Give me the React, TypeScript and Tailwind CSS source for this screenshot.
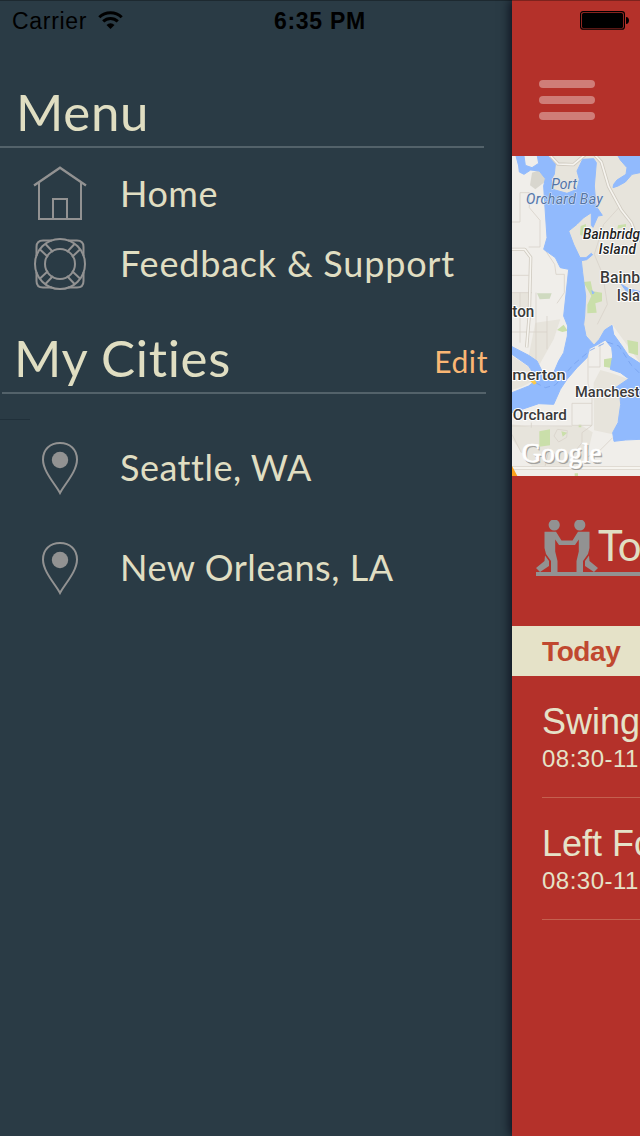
import React from 'react';

const helvetica = "font-['Liberation_Sans',sans-serif]";

function WifiIcon() {
  return (
    <svg width="25" height="18" viewBox="0 0 25 18" fill="none" stroke="#000" strokeWidth="3">
      <path d="M1.300 6.200a16 16 0 0 1 22.400 0" />
      <path d="M5.200 10.400a10.500 10.500 0 0 1 14.600 0" />
      <path d="M12.500 18l-4-4.100a5.800 5.800 0 0 1 8 0z" fill="#000" stroke="none" />
    </svg>
  );
}

function HomeIcon() {
  return (
    <svg width="54" height="54" viewBox="0 0 54 54" fill="none" stroke="#929292" strokeWidth="2">
      <path d="M1 19.500L27 1.700l26 17.800" strokeWidth="2.300" />
      <path d="M6 17v36h42V17" />
      <path d="M20 53V33h14v20" />
    </svg>
  );
}

function SupportIcon() {
  return (
    <svg width="54" height="54" viewBox="0 0 54 54" fill="none" stroke="#929292" strokeWidth="2">
      <circle cx="27" cy="27" r="25" />
      <circle cx="27" cy="27" r="15" />
      {[0, 90, 180, 270].map((a) => (
        <g key={a} transform={`rotate(${a} 27 27)`}>
          <path d="M19 3.500H10Q3.500 3.500 3.500 10v9" />
          <path d="M12 6.500l8 8.500M6.500 12l8.500 8" />
        </g>
      ))}
    </svg>
  );
}

function PinIcon() {
  return (
    <svg width="38" height="54" viewBox="0 0 38 54" fill="none" stroke="#929292" strokeWidth="2">
      <path d="M19 52C14.500 43.500 2 30.500 2 18.500C2 8.500 9 2 19 2S36 8.500 36 18.500C36 30.500 23.500 43.500 19 52z" />
      <circle cx="19" cy="19" r="8.200" fill="#929292" stroke="none" />
    </svg>
  );
}

function Person() {
  return (
    <>
      <circle cx="18.200" cy="5" r="5.600" />
      <path d="M8.500 11.700H20L25.500 20.500H31V25H23L19.200 19.500v12L21.500 41V53H15V41L10 34L8.500 28z" />
      <path d="M9 35.500L13 41v5L4 52L0 48l8.500-7z" />
    </>
  );
}

function PeopleIcon() {
  return (
    <svg className="shrink-0" width="62" height="53" viewBox="0 0 62 53" fill="#929292">
      <Person />
      <g transform="translate(62 0) scale(-1 1)">
        <Person />
      </g>
    </svg>
  );
}

function AreaMap() {
  return (
    <svg width="128" height="320" viewBox="0 0 384 960" className="block">
      <rect width="384" height="960" fill="#f0eeea" />
      <g fill="#e7e4dc">
        <path d="M110 0H384V620L300 505L246 570L195 500V300L150 180L110 80z" />
        <path d="M245 680l20-38 35 10 50 18-24 40v60l-24 65-56-12z" />
        <path d="M0 805l60 8 150-4 32 20-12 50-26 50H60L0 850z" />
        <path d="M60 50l30-10 12 35-32 25-16-12z" fill="#d8d6ce" />
        <path d="M0 600l50 32 24 38-44 22-30 10z" />
        <path d="M70 500l75-10-20 60-45 80-30-30z" />
        <path d="M0 410h52v70H0z" />
      </g>
      <g fill="#cadfaa">
        <path d="M206 210l16-6-4 38-14-6z" />
        <path d="M214 378l22-2 6 30 28 4v26l-20 6 4 28-28 2v-26l12-26z" />
        <path d="M75 412h44l-6 16-30 2z" fill="#cfdac0" />
        <path d="M135 522l20-16 12 18-16 4z" />
        <path d="M276 610l36-6v22l-14 10-22-4z" />
        <path d="M346 552l32 6v40l-28-8z" />
        <path d="M82 826l32-6v48l-32 4z" />
        <path d="M318 208l24-4v8l-26 6zM148 826l18 4-14 12zM188 952h10v8h-10zM200 806h8v8h-8z" />
      </g>
      <g fill="none" stroke="#d8d3ca" strokeWidth="2.500">
        <path d="M0 198H24V110H52v45l32 38v80H50" />
        <path d="M98 280l30 45 4 30h25v55l-22 32M0 410h60M0 358h50M24 410v150M0 528h105M72 410v210M105 480v100" />
        <path d="M325 150l-50 55-28 90 25 60 14 90-30 60" />
        <path d="M228 592v90l12 42v18h-60v66M264 565v68h-34M240 742v66l-30 22v30l-20 25M180 808h60" />
        <path d="M0 810h180M58 800v15M0 835l28 55M126 840l10-20 30 4-2 20-24 14z" />
        <path d="M302 845l-40 40-40 20M20 940h364M110 885l-12 50" />
      </g>
      <g fill="none" strokeLinejoin="round">
        <path d="M116 0l22 24 46 2 38-32M246 -6l22 24 22 74 38 70 30 38 22 60M0 280h38l18 24-4 170-8 100" stroke="#d0cbc1" strokeWidth="10" />
        <path d="M116 0l22 24 46 2 38-32M246 -6l22 24 22 74 38 70 30 38 22 60M0 280h38l18 24-4 170-8 100" stroke="#f6f4ef" strokeWidth="5" />
        <path d="M0 936h384" stroke="#d8d3ca" strokeWidth="12" />
        <path d="M0 936h384" stroke="#f6f4ef" strokeWidth="7" />
      </g>
      <g fill="#91bafd" strokeLinejoin="round" stroke="#91bafd" strokeWidth="3">
        <path d="M76 0H108L130 25L127 55L118 70L122 100L165 112L195 100L202 70L195 45L212 10L245 8L253 20L247 90L252 150L271 178L258 180L243 214L238 208L238 170L215 185L195 205L170 225L185 265L204 305L222 305L238 292L242 296L224 311L208 314L212 350L221 420L218 480L215 505L222 540L246 567L262 550L278 522L300 508L305 535L330 570L350 600L384 622V850L340 852L306 856L302 830L318 800L326 745L322 705L312 694L350 668L325 650L295 640L302 600L299 575L280 552L258 565L232 578L225 605L195 635L165 670L145 700L125 745L80 743L0 770V710L50 690L75 670L50 630L0 595V572L50 598L75 615L90 645L105 660L125 650L140 615L155 590L166 540L167 510L155 480L170 340L145 335L130 305L95 280L105 245L98 140L95 90L100 68L82 45L56 42L36 55L22 48L20 30L12 0H36L40 28L60 35L80 22z" />
        <path d="M318 0H384V50L360 55L340 78L318 90L303 95L305 85L315 72L342 55L345 35L325 12z" />
        <path d="M328 385l20 12 36 10v6l-38-3zM240 404l6 6-4 4z" />
      </g>
      <path d="M70 680l30 15 30-8 55-62 50-42 50-25 36 12 35 55 28 28" fill="none" stroke="#78a2ee" strokeWidth="2.500" strokeDasharray="18 12" />
      <path d="M0 930l16 30H0z" fill="#fba21c" />
      <path d="M52 673l14-5 8 14-8 4z" fill="#fbc84b" />
      <g className="font-[Roboto,sans-serif] font-medium" fontSize="44" fill="#3a3a3a" stroke="#fff" strokeWidth="6" strokeLinejoin="round" style={{ paintOrder: 'stroke' }}>
        <g fill="#5474a4" fontStyle="italic" fontSize="42" stroke="#dfe8f5" strokeWidth="3" fontWeight="400">
          <text x="118" y="98" textLength="77">Port</text>
          <text x="42" y="145" textLength="230">Orchard Bay</text>
        </g>
        <g fill="#222" fontStyle="italic" fontSize="41">
          <text x="213" y="249" textLength="171">Bainbridg</text>
          <text x="260" y="294" textLength="112">Island</text>
        </g>
        <g fontSize="47">
          <text x="264" y="381" textLength="120" lengthAdjust="spacingAndGlyphs">Bainb</text>
          <text x="314" y="436" textLength="70" lengthAdjust="spacingAndGlyphs">Isla</text>
          <text x="1" y="482" textLength="66" lengthAdjust="spacingAndGlyphs">ton</text>
        </g>
        <text x="1" y="672" textLength="160" lengthAdjust="spacingAndGlyphs">merton</text>
        <text x="189" y="722" textLength="194" lengthAdjust="spacingAndGlyphs">Manchest</text>
        <text x="2" y="793" textLength="163" lengthAdjust="spacingAndGlyphs">Orchard</text>
      </g>
      <g fontFamily="Liberation Serif, serif" fontSize="83">
        <text x="33" y="923" textLength="240" lengthAdjust="spacingAndGlyphs" fill="#777" opacity=".6">Google</text>
        <text x="29" y="918" textLength="240" lengthAdjust="spacingAndGlyphs" fill="#fff" stroke="#fff" strokeWidth="2">Google</text>
      </g>
    </svg>
  );
}

function MenuItem({ icon, label, className }: { icon: React.ReactNode; label: string; className: string }) {
  return (
    <div className="flex items-center">
      <div className="flex w-[120px] shrink-0 justify-center">{icon}</div>
      <span className={`whitespace-nowrap text-[36px] leading-[44px] ${className}`}>{label}</span>
    </div>
  );
}

function Event({ title, time }: { title: string; time: string }) {
  return (
    <div className={`ml-[30px] h-[122px] overflow-hidden whitespace-nowrap border-b border-[#c4604f] pt-6 text-[#e5e2c8] ${helvetica}`}>
      <div className="text-[36px] leading-[44px]">{title}</div>
      <div className="text-[24px] leading-[30px] tracking-[0.5px]">{time}</div>
    </div>
  );
}

export default function App() {
  return (
    <div className="relative flex h-[1136px] w-[640px] overflow-hidden bg-[#2a3b45] font-[Lato,sans-serif] text-[#e0dec2]">
      <aside className="flex w-[512px] shrink-0 flex-col">
        <header className={`flex h-10 items-center pl-3 text-black ${helvetica}`}>
          <span className="w-[86px] pt-0.5 text-[23px] tracking-[0.7px]">Carrier</span>
          <WifiIcon />
          <span className="ml-[151px] whitespace-nowrap pt-0.5 text-[23px] font-bold tracking-[0.7px]">6:35 PM</span>
        </header>
        <div className="flex h-[108px] w-[484px] items-end border-b-2 border-[#53626a] pl-[16px]">
          <h1 className="text-[51px] leading-[69px] tracking-[0.7px]">Menu</h1>
        </div>
        <nav className="flex flex-col gap-[17px] pt-[18px]">
          <MenuItem icon={<HomeIcon />} label="Home" className="tracking-[0.5px]" />
          <MenuItem icon={<SupportIcon />} label="Feedback & Support" className="pb-0.5 tracking-[0.8px]" />
        </nav>
        <div className="ml-[2px] mt-[33px] flex h-[70px] w-[484px] items-start justify-between border-b-2 border-[#53626a] pl-[12px]">
          <h2 className="text-[51px] leading-[67px] tracking-[0.7px]">My Cities</h2>
          <button className="mr-[-2px] mt-[17px] text-[30px] leading-[40px] tracking-[0.6px] text-[#fab674]">Edit</button>
        </div>
        <div className="mt-[25px] h-px w-[30px] bg-[#20303a]" />
        <div className="flex flex-col gap-[46px] pt-[21px]">
          <MenuItem icon={<PinIcon />} label="Seattle, WA" className="pb-0.5 tracking-[0.5px]" />
          <MenuItem icon={<PinIcon />} label="New Orleans, LA" className="pb-0.5 tracking-[0.55px]" />
        </div>
      </aside>
      <main className="w-[128px] shrink-0 bg-[#b4312a] shadow-[-2px_0_10px_rgba(0,0,15,0.75)]">
        <div className="flex h-10 items-center pl-[68px]">
          <svg width="50" height="20" viewBox="0 0 50 20">
            <rect x=".6" y="1.600" width="43.800" height="17.600" rx="2.500" fill="none" stroke="#000" strokeWidth="1.200" />
            <rect x="2" y="3" width="41" height="15" rx="1.500" />
            <path d="M46 7c4 0 4 7 0 7z" />
          </svg>
        </div>
        <div className="flex h-[116px] flex-col gap-2 pl-[27px] pt-10">
          {[0, 1, 2].map((i) => (
            <div key={i} className="h-2 w-14 rounded-full bg-[#cf7d78]" />
          ))}
        </div>
        <AreaMap />
        <div className="h-[150px] overflow-hidden pl-6 pt-11">
          <div className="flex h-[56px] items-start whitespace-nowrap border-b-4 border-[#929292]">
            <PeopleIcon />
            <span className="text-[42px] leading-[50px]">To</span>
          </div>
        </div>
        <div className={`flex h-[50px] items-center bg-[#e5e2c8] pl-[30px] pt-0.5 text-[28px] font-bold tracking-[-0.4px] text-[#c04830] ${helvetica}`}>
          Today
        </div>
        <Event title="Swing" time="08:30-11" />
        <Event title="Left Fo" time="08:30-11" />
      </main>
      <div className="absolute inset-x-0 top-0 h-px bg-black/30" />
    </div>
  );
}
